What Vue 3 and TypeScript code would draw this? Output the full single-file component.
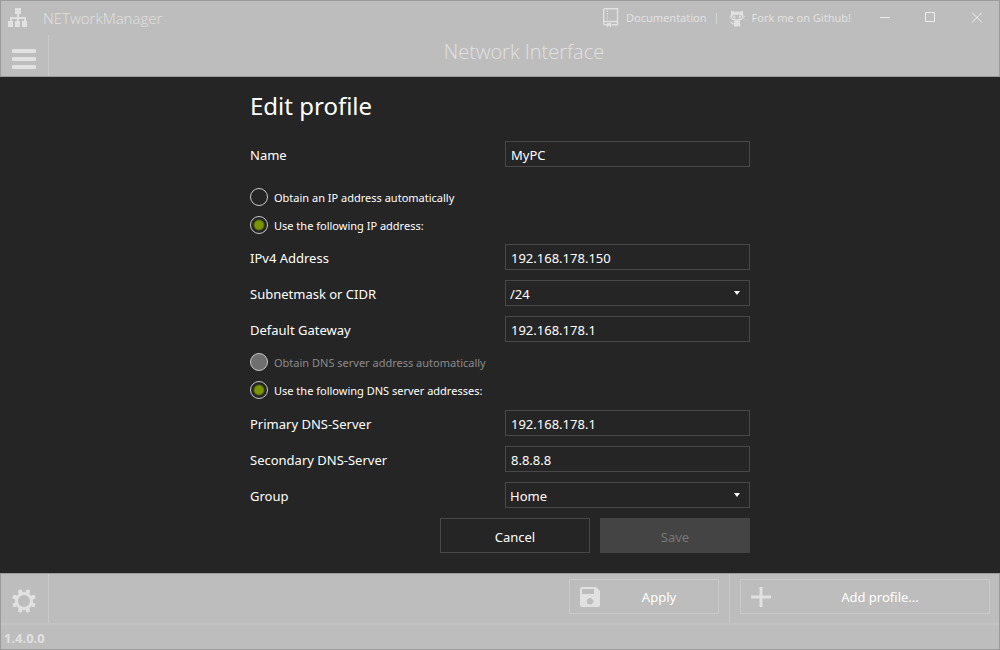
<script setup lang="ts">
import { ref } from 'vue'

const name = ref('MyPC')
const ipMode = ref('static')
const ipAddress = ref('192.168.178.150')
const subnet = ref('/24')
const gateway = ref('192.168.178.1')
const dnsMode = ref('static')
const primaryDns = ref('192.168.178.1')
const secondaryDns = ref('8.8.8.8')
const group = ref('Home')
</script>

<template>
  <div class="window">
    <header class="header">
      <div class="titlebar">
        <svg class="logo" width="20" height="20" viewBox="0 0 20 20" aria-hidden="true">
          <path d="M7 0h6v6h-2v3h7v4h1v6h-5v-6h2v-2h-5v2h1v6H7v-6h2v-2H4v2h1v6H0v-6h2V9h7V6H7z" fill="currentColor" />
        </svg>
        <span class="app-name">NETworkManager</span>
        <a class="link docs" href="#docs">
          <svg width="16" height="20" viewBox="0 0 16 20" aria-hidden="true">
            <path d="M1.500.7h13v16H8.500M4 16.700H2.200Q.7 16.700.7 15V1.500Q.7.7 1.500.7M.7 13.500h14" fill="none" stroke="currentColor" stroke-width="1.400" />
            <path d="M4 2.500h1v1.200H4zM4 5h1v1.200H4zM4 7.500h1v1.200H4zM4 10h1v1.200H4zM4 15h4v4.500l-2-1.700-2 1.700z" fill="currentColor" />
          </svg>
          <span>Documentation</span>
        </a>
        <span class="divider"></span>
        <a class="link" href="#github">
          <svg width="16" height="17" viewBox="0 0 16 17" aria-hidden="true">
            <path fill-rule="evenodd" d="M2.300.5 5.200 1.800Q8 1.200 10.800 1.800L13.700.5Q14.400 2.400 13.900 3.800 14.900 5.200 14.400 7.400 13.600 10 10.300 10.400 11.200 11.200 11.200 12.500V16.500H5V14.500Q2.600 14.700 1.900 12.700L1 11.700Q2.500 11.300 3.300 12.800 4 13.500 5 13 5.100 11.200 5.800 10.400 2.400 10 1.600 7.400 1.100 5.200 2.100 3.800 1.600 2.400 2.300.5M4.200 5Q2.800 5.600 3.100 7.500 3.700 9.200 8 9.200T12.900 7.500Q13.200 5.600 11.800 5 10.500 4.700 8 5 5.500 4.700 4.200 5" fill="currentColor" />
            <ellipse cx="5.300" cy="7" rx="1" ry="1.400" fill="currentColor" />
            <ellipse cx="10.700" cy="7" rx="1" ry="1.400" fill="currentColor" />
            <path d="M0 6.500h1.500M14.500 6.500H16M.3 9l1.500-.5M15.700 9l-1.500-.5" stroke="currentColor" stroke-width=".5" />
          </svg>
          <span>Fork me on Github!</span>
        </a>
        <div class="window-buttons">
          <button type="button" aria-label="Minimize">
            <svg width="12" height="12" viewBox="0 0 12 12"><path d="M1 5.500h10" /></svg>
          </button>
          <button type="button" aria-label="Maximize">
            <svg width="12" height="12" viewBox="0 0 12 12"><path d="M.5.5h9v9h-9z" /></svg>
          </button>
          <button type="button" aria-label="Close">
            <svg width="12" height="12" viewBox="0 0 12 12"><path d="M1 .5l10 10M11 .5L1 10.500" /></svg>
          </button>
        </div>
      </div>
      <div class="heading">
        <button class="menu" type="button" aria-label="Menu">
          <svg width="24" height="20" viewBox="0 0 24 20" fill="currentColor">
            <rect width="24" height="4" rx="1" />
            <rect y="8" width="24" height="4" rx="1" />
            <rect y="16" width="24" height="4" rx="1" />
          </svg>
        </button>
        <h1>Network Interface</h1>
      </div>
    </header>

    <main class="dialog">
      <form class="form" @submit.prevent>
        <h2>Edit profile</h2>
        <div class="row">
          <label for="name">Name</label>
          <input id="name" v-model="name" class="field" type="text" />
        </div>

        <div class="options ip">
          <label><input v-model="ipMode" type="radio" name="ip" value="auto" /><span>Obtain an IP address automatically</span></label>
          <label><input v-model="ipMode" type="radio" name="ip" value="static" /><span>Use the following IP address:</span></label>
        </div>
        <div class="rows">
          <div class="row">
            <label for="ip">IPv4 Address</label>
            <input id="ip" v-model="ipAddress" class="field" type="text" />
          </div>
          <div class="row">
            <label for="subnet">Subnetmask or CIDR</label>
            <div class="select">
              <select id="subnet" v-model="subnet" class="field">
                <option>/24</option>
              </select>
              <svg width="6" height="4" viewBox="0 0 6 4" aria-hidden="true"><path d="M0 0h6L3 4z" fill="#fff" /></svg>
            </div>
          </div>
          <div class="row">
            <label for="gateway">Default Gateway</label>
            <input id="gateway" v-model="gateway" class="field" type="text" />
          </div>
        </div>

        <div class="options dns">
          <label class="disabled"><input v-model="dnsMode" type="radio" name="dns" value="auto" disabled /><span>Obtain DNS server address automatically</span></label>
          <label><input v-model="dnsMode" type="radio" name="dns" value="static" /><span>Use the following DNS server addresses:</span></label>
        </div>
        <div class="rows">
          <div class="row">
            <label for="dns1">Primary DNS-Server</label>
            <input id="dns1" v-model="primaryDns" class="field" type="text" />
          </div>
          <div class="row">
            <label for="dns2">Secondary DNS-Server</label>
            <input id="dns2" v-model="secondaryDns" class="field" type="text" />
          </div>
          <div class="row">
            <label for="group">Group</label>
            <div class="select">
              <select id="group" v-model="group" class="field">
                <option>Home</option>
              </select>
              <svg width="6" height="4" viewBox="0 0 6 4" aria-hidden="true"><path d="M0 0h6L3 4z" fill="#fff" /></svg>
            </div>
          </div>
        </div>

        <div class="actions">
          <button type="button">Cancel</button>
          <button type="submit" disabled>Save</button>
        </div>
      </form>
    </main>

    <footer class="footer">
      <div class="toolbar">
        <button class="settings" type="button" aria-label="Settings">
          <svg width="24" height="24" viewBox="-12 -12 24 24">
            <circle r="7.500" fill="none" stroke="currentColor" stroke-width="3" />
            <g fill="currentColor">
              <path v-for="n in 8" :key="n" d="M-2.300-8L-1.700-12H1.700L2.300-8z" :transform="`rotate(${n * 45 - 22.5})`" />
            </g>
          </svg>
        </button>
        <div class="apply-area">
          <button class="action apply" type="button">
            <svg width="20" height="20" viewBox="0 0 20 20" aria-hidden="true">
              <path fill-rule="evenodd" d="M2 0h14l4 4v14q0 2-2 2H2q-2 0-2-2V2Q0 0 2 0M2 2v5h12V2zM10 11a3.300 3.300 0 1 0 .01 0" fill="currentColor" />
            </svg>
            <span>Apply</span>
          </button>
        </div>
        <div class="add-area">
          <button class="action add" type="button">
            <svg width="20" height="20" viewBox="0 0 20 20" aria-hidden="true">
              <path d="M8.500 0h3v8.500H20v3h-8.500V20h-3v-8.500H0v-3h8.500z" fill="currentColor" />
            </svg>
            <span>Add profile...</span>
          </button>
        </div>
      </div>
      <div class="status">1.4.0.0</div>
    </footer>
  </div>
</template>

<style>
body {
  margin: 0;
}
</style>

<style scoped>
* {
  box-sizing: border-box;
}
.window {
  min-height: 100vh;
  display: flex;
  flex-direction: column;
  background: #bdbdbd;
  color: #e1e1e1;
  font-family: "Noto Sans", "Open Sans", sans-serif;
  font-size: 13px;
}
svg {
  display: block;
  flex: none;
}
button,
input,
select {
  margin: 0;
  padding: 0;
  border: 0;
  border-radius: 0;
  background: none;
  color: inherit;
  font: inherit;
}
.header {
  height: 77px;
  border: 1px solid #9b9b9b;
  display: flex;
  flex-direction: column;
}
.titlebar {
  height: 34px;
  padding-left: 7px;
  display: flex;
  align-items: center;
}
.app-name {
  margin-left: 15px;
  margin-right: auto;
  font-family: "Open Sans", sans-serif;
  font-size: 15px;
  font-weight: 300;
}
.link {
  display: flex;
  align-items: center;
  gap: 7px;
  color: inherit;
  font-size: 11px;
  line-height: 32px;
  text-decoration: none;
}
.divider {
  width: 1px;
  height: 11px;
  margin: 0 12px 0 9px;
  background: #d2d2d2;
}
.window-buttons {
  display: flex;
  margin-left: 11px;
  margin-right: -1px;
}
.window-buttons button {
  width: 46px;
  height: 32px;
  display: grid;
  place-items: center;
}
.window-buttons path {
  fill: none;
  stroke: #eee;
}
.heading {
  flex: 1;
  display: flex;
}
.menu,
.settings {
  width: 48px;
  padding: 6px 0 0 11px;
  border-right: 1px solid #c9c9c9;
  display: grid;
  align-items: center;
  justify-content: start;
}
.settings {
  padding-top: 4px;
}
.heading h1 {
  flex: 1;
  margin: 0;
  font-family: "Open Sans", sans-serif;
  font-size: 20px;
  line-height: 34px;
  font-weight: 300;
  text-align: center;
}
.dialog {
  flex: 1;
  padding: 12px 25% 20px;
  background: #252525;
  color: #fff;
}
.form h2 {
  margin: 0 0 18px;
  font-size: 24px;
  line-height: 34px;
  font-weight: 400;
}
.rows {
  display: grid;
  gap: 10px;
}
.row {
  display: grid;
  grid-template-columns: 51% 49%;
  align-items: center;
}
.row label {
  padding-top: 2px;
}
.field {
  display: block;
  width: 100%;
  height: 26px;
  padding: 1px 5px 0;
  border: 1px solid #484848;
  outline: 0;
  appearance: none;
}
.select {
  position: relative;
}
.select .field {
  padding: 1px 4px 0;
}
.select svg {
  position: absolute;
  right: 10px;
  top: 11px;
  pointer-events: none;
}
.options {
  display: grid;
  gap: 10px;
  font-size: 11px;
  line-height: 16px;
}
.options.ip {
  margin: 21px 0 10px;
}
.options.dns {
  margin: 11px 0;
}
.options label {
  display: flex;
  align-items: center;
  gap: 6px;
}
.options span {
  padding-top: 1px;
}
.options input {
  width: 18px;
  height: 18px;
  border: 1px solid #c8c8c8;
  border-radius: 50%;
  appearance: none;
}
.options input:checked {
  background: radial-gradient(circle, #7b9500 4px, transparent 6px);
}
.options .disabled {
  color: #8b8b8b;
}
.options input:disabled {
  background: #6f6f6f;
}
.actions {
  margin-top: 10px;
  display: flex;
  justify-content: flex-end;
  gap: 10px;
}
.actions button {
  width: 150px;
  height: 35px;
  padding-top: 2px;
  border: 1px solid #484848;
}
.actions button:disabled {
  border-color: #444;
  background: #444;
  color: #777;
}
.footer {
  border: 1px solid #9b9b9b;
}
.toolbar {
  height: 51px;
  border-bottom: 2px solid #c2c2c2;
  display: flex;
}
.apply-area {
  flex: 1;
  padding: 5px 10px 0;
  border-right: 1px solid #c9c9c9;
  display: flex;
  justify-content: flex-end;
}
.add-area {
  padding: 5px 9px 0 10px;
}
.action {
  height: 35px;
  padding: 0 0 0 10px;
  border: 1px solid #c9c9c9;
  display: flex;
  align-items: center;
}
.action span {
  flex: 1;
  color: #fff;
}
.apply {
  width: 150px;
}
.add {
  width: 250px;
}
.status {
  height: 24px;
  padding-left: 3px;
  font-size: 13px;
  line-height: 26px;
  font-weight: 700;
}
</style>
